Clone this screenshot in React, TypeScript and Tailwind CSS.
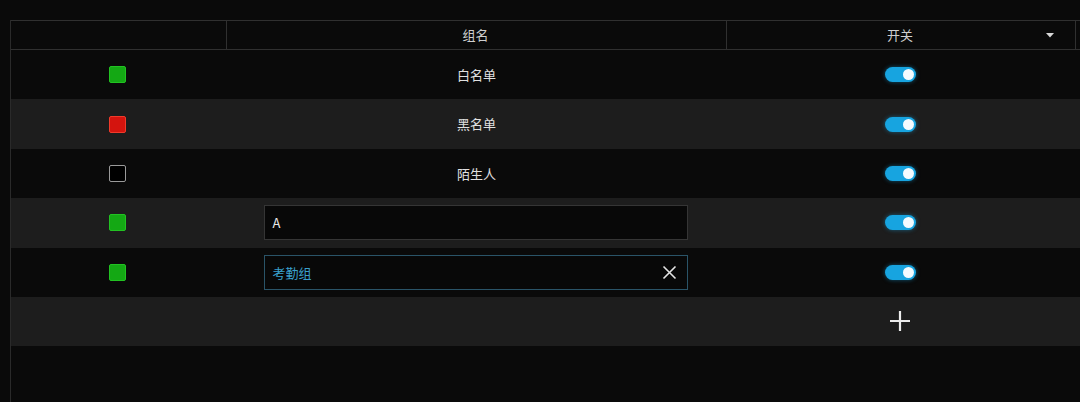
import React from "react";

const font = { fontFamily: '"Noto Sans CJK SC", "Noto Sans", sans-serif' };

function Check({ color }: { color: "green" | "red" | "none" }) {
  if (color === "green")
    return <div className="w-[17px] h-[17px] rounded-[2px] bg-[#14a814] border border-[#22c222]" />;
  if (color === "red")
    return <div className="w-[17px] h-[17px] rounded-[2px] bg-[#d4140e] border border-[#f03a2a]" />;
  return <div className="w-[17px] h-[17px] rounded-[2px] bg-black border border-[#9a9a9a]" />;
}

function Toggle() {
  return (
    <div className="w-[31px] h-[15px] rounded-full bg-[#17a4e0] relative shadow-[0_0_4px_rgba(23,164,224,0.5)]">
      <div className="absolute right-[2px] top-[2px] w-[11px] h-[11px] rounded-full bg-[#f4fbff]" />
    </div>
  );
}

type Row = { check: "green" | "red" | "none"; name?: string; input?: "plain" | "focus"; value?: string };

const rows: Row[] = [
  { check: "green", name: "白名单" },
  { check: "red", name: "黑名单" },
  { check: "none", name: "陌生人" },
  { check: "green", input: "plain", value: "A" },
  { check: "green", input: "focus", value: "考勤组" },
];

export default function App() {
  return (
    <div className="w-[1080px] h-[402px] bg-[#0a0a0a] overflow-hidden text-[13px]" style={font}>
      <div className="pt-[20px] pl-[10px] h-full">
        <div className="border-l border-[#2a2a2a] h-full">
          {/* header */}
          <div className="flex h-[30px] border-t border-b border-[#303030] text-[#cfcfcf]">
            <div className="w-[216px] border-r border-[#303030]" />
            <div className="w-[500px] flex items-center justify-center border-r border-[#303030] pr-[2px]">组名</div>
            <div className="w-[349px] flex items-center justify-center relative border-r border-[#303030] pr-[2px]">
              开关
              <svg className="absolute right-[21px] top-[12px]" width="8" height="5" viewBox="0 0 8 5">
                <path d="M0 0 L8 0 L4 4.5 Z" fill="#d8d8d8" />
              </svg>
            </div>
          </div>
          {rows.map((r, i) => (
            <div key={i} className={`flex h-[49.4px] items-center ${i % 2 === 1 ? "bg-[#1d1d1d]" : "bg-[#0a0a0a]"}`}>
              <div className="w-[215px] flex justify-center pr-[3px]">
                <Check color={r.check} />
              </div>
              <div className="w-[501px] flex justify-center text-[#e0e0e0]">
                {r.name ? (
                  r.name
                ) : (
                  <div
                    className={`ml-[37px] mr-[39px] w-[424px] h-[35px] flex items-center px-[8px] bg-[#080808] border ${
                      r.input === "focus" ? "border-[#2a5468] text-[#3aa0cc]" : "border-[#353535] text-[#e6e6e6]"
                    }`}
                  >
                    <span className="flex-1">{r.value}</span>
                    {r.input === "focus" && (
                      <svg width="15" height="15" viewBox="0 0 15 15" className="mr-[2px]">
                        <path d="M1.5 1.5 L13.5 13.5 M13.5 1.5 L1.5 13.5" stroke="#e4e4e4" strokeWidth="1.6" />
                      </svg>
                    )}
                  </div>
                )}
              </div>
              <div className="w-[349px] flex justify-center pr-[2px]">
                <Toggle />
              </div>
            </div>
          ))}
          <div className="flex h-[49px] items-center bg-[#1d1d1d]">
            <div className="w-[716px]" />
            <div className="w-[349px] flex justify-center pr-[4px]">
              <svg width="22" height="22" viewBox="0 0 22 22">
                <path d="M11 1 V21 M1 11 H21" stroke="#ececec" strokeWidth="2.2" />
              </svg>
            </div>
          </div>
        </div>
      </div>
    </div>
  );
}
